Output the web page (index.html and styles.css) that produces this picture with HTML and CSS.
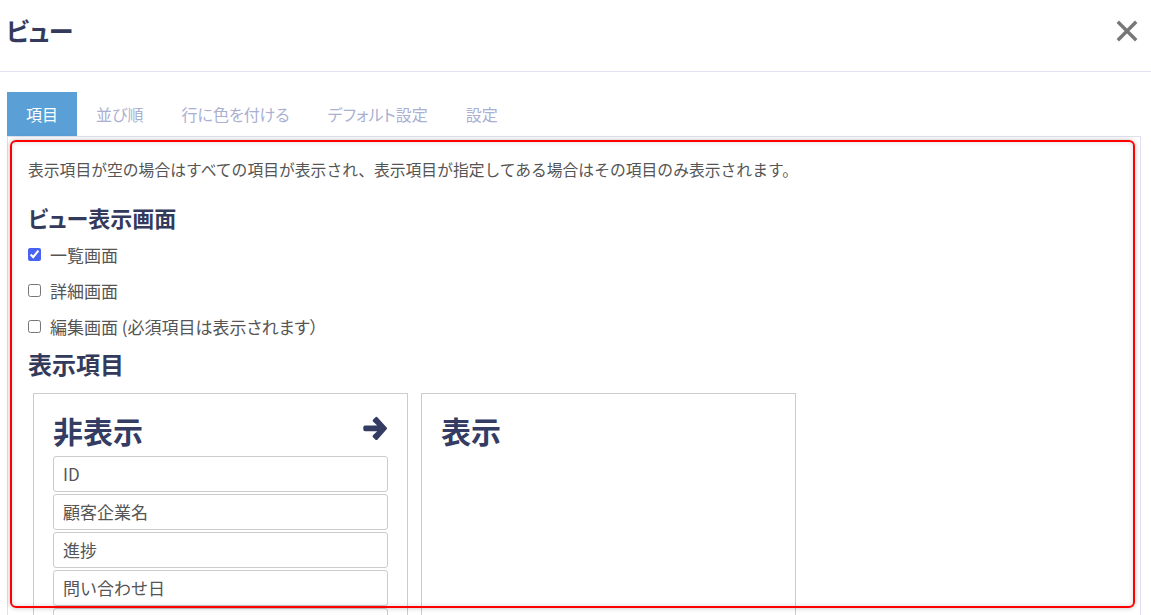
FILE: index.html
```html
<!DOCTYPE html>
<html lang="ja">
<head>
<meta charset="utf-8">
<title>ビュー</title>
<link rel="stylesheet" href="styles.css">
</head>
<body>
<div class="dialog">
  <header class="dlg-header">
    <h1 class="dlg-title">ビュー</h1>
    <button class="close-btn" aria-label="close">
      <svg width="22" height="22" viewBox="0 0 22 22"><path d="M3 3 L19 19 M19 3 L3 19" stroke="#777" stroke-width="3.4" stroke-linecap="square"/></svg>
    </button>
  </header>
  <nav class="tabs">
    <div class="tab active">項目</div>
    <div class="tab">並び順</div>
    <div class="tab">行に色を付ける</div>
    <div class="tab">デフォルト設定</div>
    <div class="tab">設定</div>
  </nav>
  <section class="panel">
    <div class="highlight"></div>
    <p class="desc">表示項目が空の場合はすべての項目が表示され、表示項目が指定してある場合はその項目のみ表示されます。</p>
    <h2 class="sec-title first">ビュー表示画面</h2>
    <label class="check-row"><input type="checkbox" checked><span>一覧画面</span></label>
    <label class="check-row"><input type="checkbox"><span>詳細画面</span></label>
    <label class="check-row"><input type="checkbox"><span class="narrow">編集画面 (必須項目は表示されます）</span></label>
    <h2 class="sec-title second">表示項目</h2>
    <div class="columns">
      <div class="col">
        <div class="col-head">
          <h3 class="col-title">非表示</h3>
          <svg class="arrow" width="26" height="24" viewBox="0 0 26 24"><path d="M13.2 1.4 L11.2 3.4 a1.7 1.7 0 0 0 0 2.4 L15.2 9.6 H3 a1.7 1.7 0 0 0 -1.7 1.7 v2.2 a1.7 1.7 0 0 0 1.7 1.7 H15.2 L11.2 19 a1.7 1.7 0 0 0 0 2.4 L13.2 23.4 a1.7 1.7 0 0 0 2.4 0 L24.4 13.6 a1.7 1.7 0 0 0 0 -2.4 L15.6 1.4 a1.7 1.7 0 0 0 -2.4 0 Z" fill="#343c63"/></svg>
        </div>
        <ul class="items">
          <li>ID</li>
          <li>顧客企業名</li>
          <li>進捗</li>
          <li>問い合わせ日</li>
          <li class="cut"></li>
        </ul>
      </div>
      <div class="col">
        <div class="col-head">
          <h3 class="col-title">表示</h3>
        </div>
      </div>
    </div>
  </section>
</div>
</body>
</html>
```

FILE: styles.css
```css
html, body {
  margin: 0;
  padding: 0;
  background: #fff;
  overflow: hidden;
  height: 615px;
}
body {
  font-family: "Noto Sans CJK JP", "Noto Sans", sans-serif;
  color: #555;
}
.dialog {
  width: 1151px;
}
.dlg-header {
  height: 72px;
  border-bottom: 1px solid #e2e2f2;
  display: flex;
  align-items: center;
  justify-content: space-between;
  padding: 0 13px 0 6px;
  box-sizing: border-box;
}
.dlg-title {
  margin: 0;
  font-size: 25px;
  font-weight: 700;
  color: #333a5c;
  line-height: 32px;
  margin-top: -11px;
  font-feature-settings: "palt";
  letter-spacing: -0.5px;
}
.close-btn {
  border: 0;
  background: none;
  padding: 0;
  width: 22px;
  height: 22px;
  margin-top: -10px;
  display: flex;
}
.tabs {
  display: flex;
  margin: 20px 11px 0 7px;
  height: 44px;
}
.tab {
  padding: 0 19px;
  font-size: 16px;
  line-height: 44px;
  color: #aab0d2;
  white-space: nowrap;
  font-feature-settings: "palt";
}
.tab.active {
  background: #5a9fd6;
  color: #fff;
}
.panel {
  position: relative;
  margin: 0 10px 0 7px;
  border: 1px solid #dedff0;
  border-bottom: 0;
  padding: 21px 20px 0 20px;
  height: 480px;
}
.highlight {
  position: absolute;
  left: 2px;
  top: 3px;
  width: 1125px;
  height: 468px;
  box-sizing: border-box;
  border: 2px solid #f00;
  border-radius: 6px;
  box-shadow: 0 0 5px rgba(0,0,0,0.25), inset 0 0 5px rgba(0,0,0,0.15);
  pointer-events: none;
  z-index: 2;
}
.desc {
  margin: 0;
  font-size: 15.8px;
  line-height: 24px;
  color: #555;
}
.sec-title {
  margin: 0;
  font-size: 22px;
  line-height: 32px;
  font-weight: 700;
  color: #333a5c;
}
.sec-title.first {
  margin-top: 19px;
  font-feature-settings: "palt";
}
.sec-title.second {
  margin-top: 4px;
  font-size: 24px;
}
.check-row {
  display: flex;
  align-items: center;
  height: 36px;
  font-size: 17px;
  color: #555;
}
.check-row .narrow {
  font-feature-settings: "palt";
}
.check-row:first-of-type {
  margin-top: 3px;
}
.check-row input {
  margin: 0 9px 0 0;
  width: 13px;
  height: 13px;
  accent-color: #4a62f0;
}
.columns {
  display: flex;
  gap: 13px;
  margin: 13px 0 0 5px;
}
.col {
  width: 375px;
  height: 260px;
  box-sizing: border-box;
  border: 1px solid #cccccc;
  padding: 16px 19px 0 19px;
}
.col-head {
  display: flex;
  align-items: center;
  justify-content: space-between;
  height: 40px;
}
.col-title {
  margin: 0;
  font-size: 30px;
  line-height: 40px;
  font-weight: 700;
  color: #343c63;
}
.arrow {
  margin-top: -4px;
}
.items {
  list-style: none;
  margin: 6px 0 0 0;
  padding: 0;
}
.items li {
  height: 36px;
  box-sizing: border-box;
  border: 1px solid #cccccc;
  border-radius: 3px;
  margin-bottom: 2px;
  padding: 0 9px;
  font-size: 17px;
  line-height: 34px;
  color: #555;
}
.items li.cut {
  margin-top: 1px;
}
```
